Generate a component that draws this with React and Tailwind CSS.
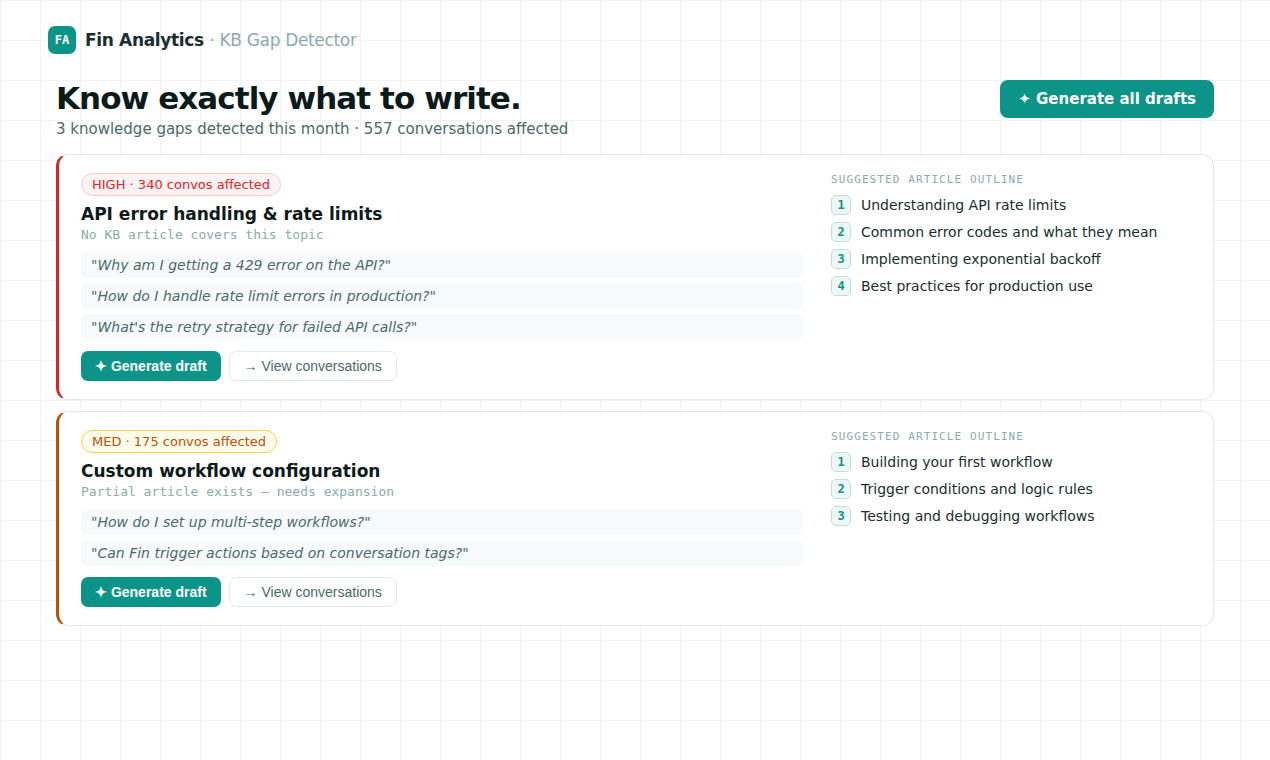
const gaps = [
  {
    title: "API error handling & rate limits",
    badge: "HIGH · 340 convos affected",
    note: "No KB article covers this topic",
    accent: "border-l-[#dc2626]",
    pill: "border-[#fecaca] bg-[#fef2f2] text-[#dc2626]",
    questions: [
      "Why am I getting a 429 error on the API?",
      "How do I handle rate limit errors in production?",
      "What's the retry strategy for failed API calls?",
    ],
    outline: [
      "Understanding API rate limits",
      "Common error codes and what they mean",
      "Implementing exponential backoff",
      "Best practices for production use",
    ],
  },
  {
    title: "Custom workflow configuration",
    badge: "MED · 175 convos affected",
    note: "Partial article exists — needs expansion",
    accent: "border-l-[#b45309]",
    pill: "border-[#fcd34d] bg-[#fffbeb] text-[#b45309]",
    questions: [
      "How do I set up multi-step workflows?",
      "Can Fin trigger actions based on conversation tags?",
    ],
    outline: [
      "Building your first workflow",
      "Trigger conditions and logic rules",
      "Testing and debugging workflows",
    ],
  },
];

function GapCard({ gap }) {
  return (
    <article
      className={`grid grid-cols-[minmax(0,1fr)_360px] gap-7 rounded-xl border border-l-3 border-[#e2eaea] bg-white px-[22px] py-[18px] ${gap.accent}`}
    >
      <div>
        <span className={`inline-block rounded-full border px-2.5 py-[3px] text-[13px] leading-[15px] align-top ${gap.pill}`}>
          {gap.badge}
        </span>
        <h2 className="mt-[7px] text-[17px] leading-5 font-bold text-[#0d1a1a]">{gap.title}</h2>
        <p className="mt-[3px] mb-2.5 font-['DejaVu_Sans_Mono',monospace] text-[13px] leading-[15px] text-[#8aabab]">
          {gap.note}
        </p>
        <ul className="flex flex-col gap-[5px]">
          {gap.questions.map((q) => (
            <li key={q} className="rounded-md bg-[#f6fafb] px-2.5 py-[5px] text-sm leading-4 text-[#4a6a6a] italic">
              "{q}"
            </li>
          ))}
        </ul>
        <div className="mt-[11px] flex gap-2 font-['Liberation_Sans',sans-serif] text-sm leading-4">
          <button type="button" className="rounded-[7px] bg-[#0d9488] px-3.5 py-[7px] font-bold text-white">
            ✦ Generate draft
          </button>
          <button type="button" className="rounded-[7px] border border-[#e2eaea] bg-white px-3.5 py-1.5 text-[#4a6a6a]">
            → View conversations
          </button>
        </div>
      </div>
      <div>
        <h3 className="mb-[9px] font-['DejaVu_Sans_Mono',monospace] text-[11px] leading-[13px] tracking-widest text-[#8aabab] uppercase">
          Suggested article outline
        </h3>
        <ol className="flex flex-col gap-[7px]">
          {gap.outline.map((item, i) => (
            <li key={item} className="flex items-center gap-2.5 text-sm leading-5 text-[#1a2e2e]">
              <span className="flex size-5 shrink-0 items-center justify-center rounded-[5px] border border-[#bfe1de] bg-[#edf7f6] font-['DejaVu_Sans_Mono',monospace] text-xs font-bold text-[#0d9488]">
                {i + 1}
              </span>
              {item}
            </li>
          ))}
        </ol>
      </div>
    </article>
  );
}

export default function App() {
  return (
    <div className="min-h-screen bg-white bg-[linear-gradient(#f0f4f4_1px,transparent_1px),linear-gradient(90deg,#f0f4f4_1px,transparent_1px)] bg-size-[40px_40px] px-12 py-[26px] font-['DejaVu_Sans',sans-serif]">
      <header className="flex items-center gap-[9px]">
        <div className="flex size-7 items-center justify-center rounded-[7px] bg-[#0d9488] font-['DejaVu_Sans_Mono',monospace] text-xs font-bold text-white">
          FA
        </div>
        <p className="text-[17px] leading-5 font-bold tracking-[-0.02em] text-[#1a2e2e]">
          Fin Analytics <span className="font-normal text-[#8aabab]">· KB Gap Detector</span>
        </p>
      </header>
      <main className="mt-[26px] px-2">
        <div className="flex items-start justify-between">
          <div>
            <h1 className="text-[31px] leading-[37px] font-bold tracking-[-0.03em] text-[#0d1a1a]">
              Know exactly what to write.
            </h1>
            <p className="mt-[3px] text-[15px] leading-[18px] text-[#4a6a6a]">
              3 knowledge gaps detected this month · 557 conversations affected
            </p>
          </div>
          <button type="button" className="rounded-lg bg-[#0d9488] px-[18px] py-2.5 text-[15px] leading-[18px] font-bold text-white">
            ✦ Generate all drafts
          </button>
        </div>
        <div className="mt-4 flex flex-col gap-[11px]">
          {gaps.map((gap) => (
            <GapCard key={gap.title} gap={gap} />
          ))}
        </div>
      </main>
    </div>
  );
}
